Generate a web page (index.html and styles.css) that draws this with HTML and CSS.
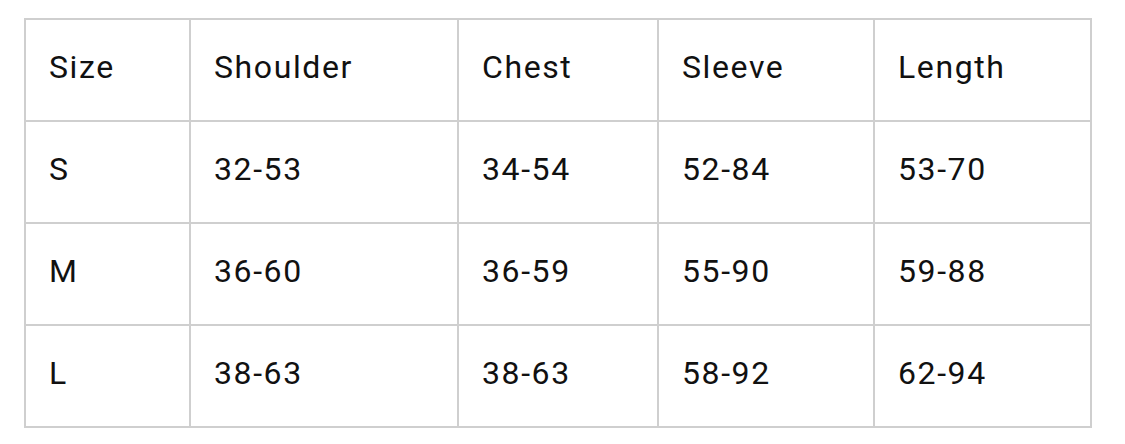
FILE: index.html
```html
<!DOCTYPE html>
<html>
<head>
<meta charset="utf-8">
<link rel="stylesheet" href="styles.css">
</head>
<body>
<div class="page">
  <div class="size-table">
    <div class="cell">Size</div><div class="cell">Shoulder</div><div class="cell">Chest</div><div class="cell">Sleeve</div><div class="cell">Length</div>
    <div class="cell">S</div><div class="cell">32-53</div><div class="cell">34-54</div><div class="cell">52-84</div><div class="cell">53-70</div>
    <div class="cell">M</div><div class="cell">36-60</div><div class="cell">36-59</div><div class="cell">55-90</div><div class="cell">59-88</div>
    <div class="cell">L</div><div class="cell">38-63</div><div class="cell">38-63</div><div class="cell">58-92</div><div class="cell">62-94</div>
  </div>
</div>
</body>
</html>
```
FILE: styles.css
```css
html, body {
  margin: 0;
  padding: 0;
  background: #ffffff;
}
.page {
  padding: 18px 0 0 24px;
}
.size-table {
  display: grid;
  grid-template-columns: 163px 266px 198px 214px 215px;
  grid-template-rows: repeat(4, 100px);
  gap: 2px;
  padding: 2px;
  background: #cfcfcf;
  width: max-content;
}
.cell {
  background: #ffffff;
  display: flex;
  align-items: center;
  padding-left: 23px;
  padding-bottom: 7px;
  font-family: Roboto, "Liberation Sans", sans-serif;
  font-size: 32px;
  letter-spacing: 1.6px;
  color: #111111;
}
```
